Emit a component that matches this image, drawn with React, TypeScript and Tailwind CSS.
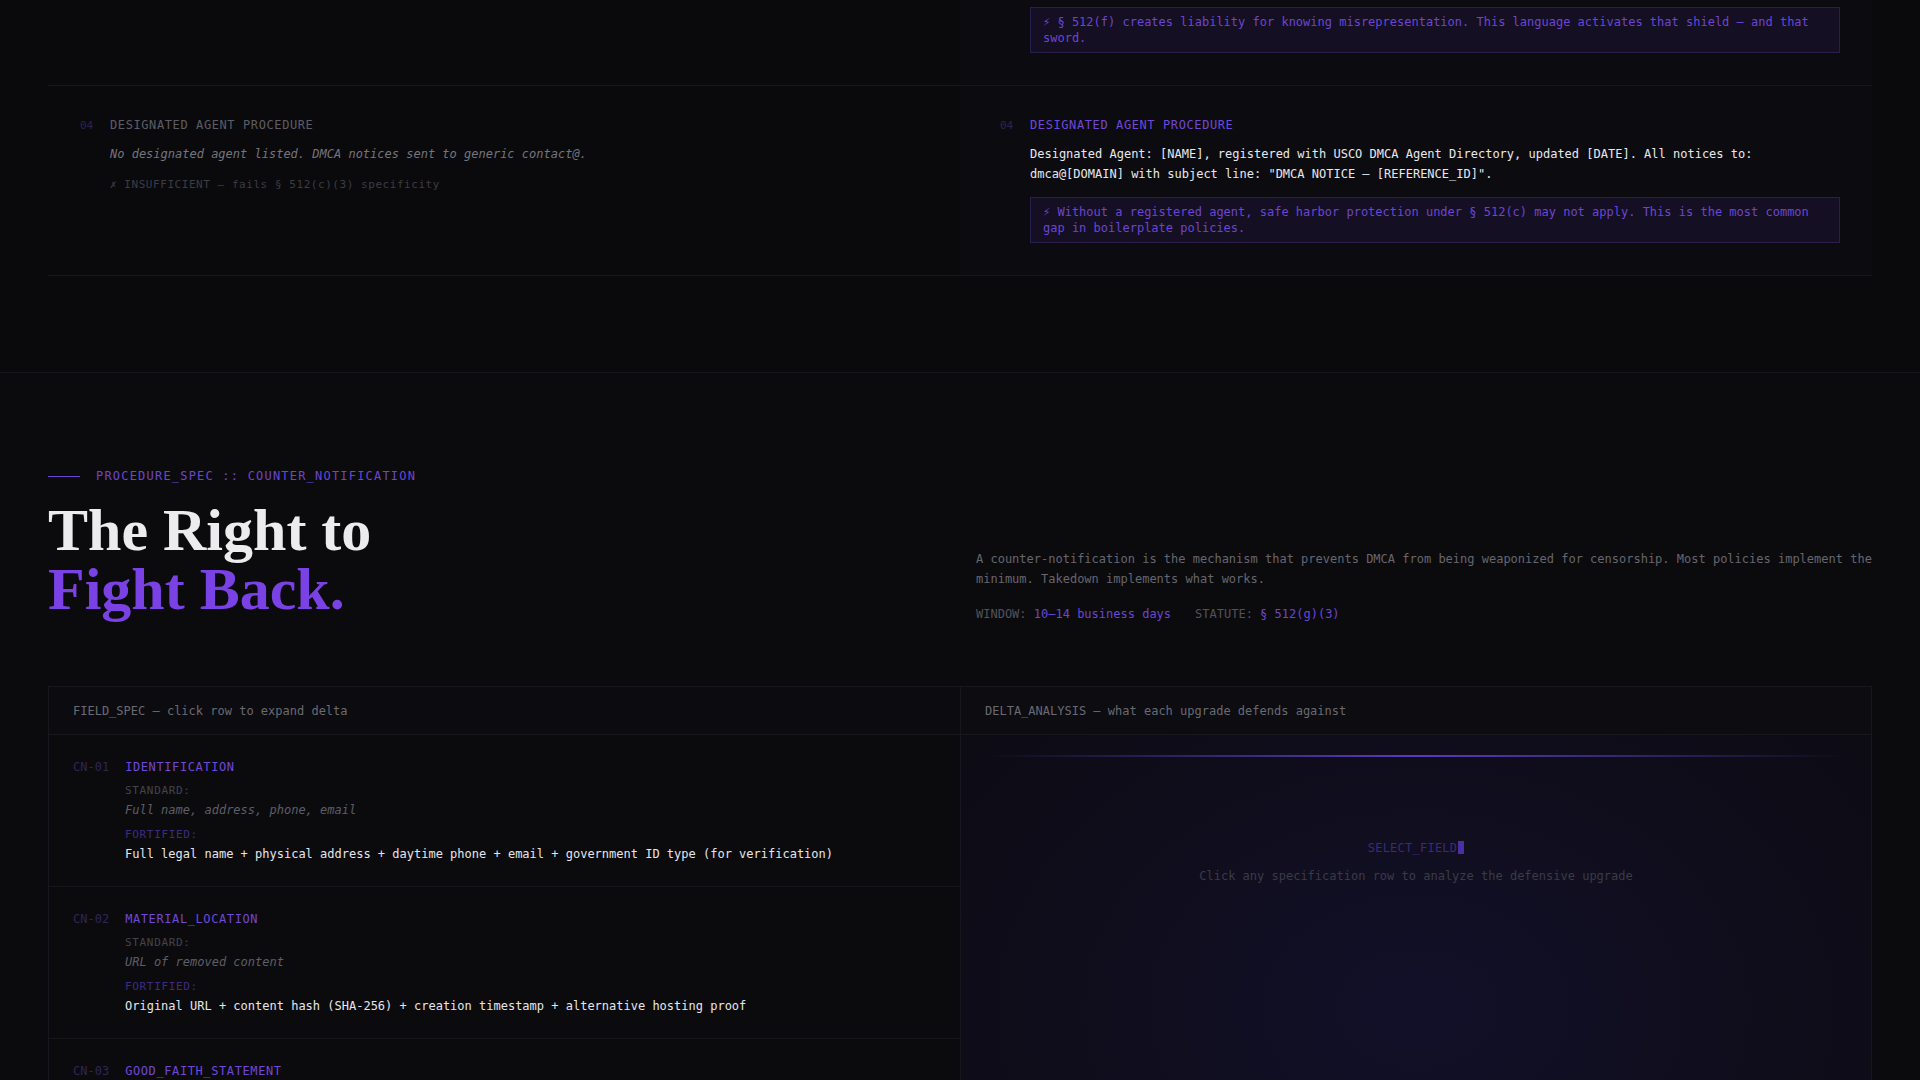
import React from "react";

const mono = "font-['DejaVu_Sans_Mono','Liberation_Mono',monospace]";

const clauses = [
  {
    n: "03",
    title: "BAD FAITH NOTICE PENALTY",
    weak: "Notices must be accurate. Abuse of the process is prohibited.",
    verdict: "✗ INSUFFICIENT — fails § 512(f) deterrence, no consequence",
    strong:
      "Any notice found to contain knowing material misrepresentation will be logged, published to the Lumen database, and referred for action under 17 U.S.C. § 512(f), including recovery of costs and fees.",
    note: "⚡ § 512(f) creates liability for knowing misrepresentation. This language activates that shield — and that sword.",
  },
  {
    n: "04",
    title: "DESIGNATED AGENT PROCEDURE",
    weak: "No designated agent listed. DMCA notices sent to generic contact@.",
    verdict: "✗ INSUFFICIENT — fails § 512(c)(3) specificity",
    strong:
      'Designated Agent: [NAME], registered with USCO DMCA Agent Directory, updated [DATE]. All notices to: dmca@[DOMAIN] with subject line: "DMCA NOTICE — [REFERENCE_ID]".',
    note: "⚡ Without a registered agent, safe harbor protection under § 512(c) may not apply. This is the most common gap in boilerplate policies.",
  },
];

const fields = [
  {
    id: "CN-01",
    name: "IDENTIFICATION",
    standard: "Full name, address, phone, email",
    fortified: "Full legal name + physical address + daytime phone + email + government ID type (for verification)",
  },
  {
    id: "CN-02",
    name: "MATERIAL_LOCATION",
    standard: "URL of removed content",
    fortified: "Original URL + content hash (SHA-256) + creation timestamp + alternative hosting proof",
  },
  {
    id: "CN-03",
    name: "GOOD_FAITH_STATEMENT",
    standard: "Statement under penalty of perjury",
    fortified: "Sworn statement + specific reason the removal was a mistake or misidentification + supporting evidence",
  },
  {
    id: "CN-04",
    name: "JURISDICTION_CONSENT",
    standard: "Consent to federal district court",
    fortified: "Consent to jurisdiction + named venue + agreement to accept service of process from the claimant",
  },
];

function ClauseRow({ c }: { c: (typeof clauses)[number] }) {
  return (
    <div className="grid grid-cols-2 border-b border-[#17171d]">
      <div className="flex items-start gap-4 px-8 pt-[30px] pb-8">
        <span className="w-[14px] pt-px text-[11px] leading-[18px] text-[#2c2450]">{c.n}</span>
        <div className="flex-1">
          <div className="text-[12px] leading-[18px] tracking-wider text-[#5d5d65]">{c.title}</div>
          <p className="mt-[10px] text-[12px] leading-[20px] italic text-[#75757d]">{c.weak}</p>
          <div className="mt-3 text-[11px] leading-[18px] tracking-wider text-[#3c3c44]">{c.verdict}</div>
        </div>
      </div>
      <div className="flex items-start gap-4 bg-[#0c0c10] pl-10 pr-8 pt-[30px] pb-8">
        <span className="w-[14px] pt-px text-[11px] leading-[18px] text-[#2c2450]">{c.n}</span>
        <div className="flex-1">
          <div className="text-[12px] leading-[18px] tracking-wider text-[#7048d8]">{c.title}</div>
          <p className="mt-[10px] text-[12px] leading-[20px] text-[#e8e8ec]">{c.strong}</p>
          <div className="mt-[13px] border border-[#2a1f4c] bg-[#140f22] px-3 py-[6px] text-[12px] leading-[16px] text-[#6d45d4]">
            {c.note}
          </div>
        </div>
      </div>
    </div>
  );
}

function FieldRow({ f }: { f: (typeof fields)[number] }) {
  return (
    <div className="border-b border-[#15151c] px-6 pt-[23px] pb-[22px]">
      <div className="flex gap-4 text-[12px] leading-[18px]">
        <span className="text-[#2f2657]">{f.id}</span>
        <span className="tracking-wider text-[#7048d8]">{f.name}</span>
      </div>
      <div className="pl-[52px]">
        <div className="mt-[6px] text-[11px] leading-[18px] tracking-[0.06em] text-[#43434b]">STANDARD:</div>
        <div className="text-[12px] leading-[20px] italic text-[#5e5e66]">{f.standard}</div>
        <div className="mt-[6px] text-[11px] leading-[18px] tracking-[0.06em] text-[#3e2c80]">FORTIFIED:</div>
        <div className="text-[12px] leading-[20px] text-[#e6e6ea]">{f.fortified}</div>
      </div>
    </div>
  );
}

export default function App() {
  return (
    <div className={`min-h-screen overflow-hidden bg-[#0a0a0d] ${mono}`}>
      <div className="-mt-[104px]">
        <section className="px-12 pb-24">
          {clauses.map((c) => (
            <ClauseRow key={c.n} c={c} />
          ))}
        </section>

        <section className="border-t border-[#16151d] bg-[#0b0b0e] px-12 pt-24">
          <div className="grid grid-cols-2 items-end gap-8">
            <div>
              <div className="flex items-center gap-4">
                <span className="h-px w-8 bg-[#6d45d4]" />
                <span className="text-[12px] leading-[14px] tracking-[0.1em] text-[#6d45d4]">
                  PROCEDURE_SPEC :: COUNTER_NOTIFICATION
                </span>
              </div>
              <h2 className="mt-[18px] pb-1 font-['Liberation_Serif',serif] text-[60px] leading-[59px] font-bold text-[#ececef]">
                The Right to
                <br />
                <span className="text-[#7a42e4]">Fight Back.</span>
              </h2>
            </div>
            <div>
              <p className="text-[12px] leading-[20px] text-[#66666f]">
                A counter-notification is the mechanism that prevents DMCA from being weaponized for censorship. Most
                policies implement the minimum. Takedown implements what works.
              </p>
              <div className="mt-4 flex gap-6 text-[12px] leading-[18px]">
                <span className="text-[#52525b]">
                  WINDOW: <span className="text-[#6d45d4]">10–14 business days</span>
                </span>
                <span className="text-[#52525b]">
                  STATUTE: <span className="text-[#6d45d4]">§ 512(g)(3)</span>
                </span>
              </div>
            </div>
          </div>

          <div className="mt-[63px] grid grid-cols-2 border border-[#17171f]">
            <div>
              <div className="flex h-[48px] items-center border-b border-[#17171f] bg-[#0c0c10] px-6 text-[12px] text-[#6a6a72]">
                FIELD_SPEC — click row to expand delta
              </div>
              {fields.map((f) => (
                <FieldRow key={f.id} f={f} />
              ))}
            </div>
            <div className="flex flex-col border-l border-[#17171f]">
              <div className="flex h-[48px] items-center border-b border-[#17171f] bg-[#0c0c11] px-6 text-[12px] text-[#6a6a72]">
                DELTA_ANALYSIS — what each upgrade defends against
              </div>
              <div className="flex-1 bg-[radial-gradient(ellipse_at_50%_45%,#121029_0%,#0f0d1b_55%,#0c0b12_100%)] px-6 pt-5">
                <div className="h-[2px] bg-linear-to-r from-transparent via-[#5a3bc0] to-transparent" />
                <div className="mt-[82px] text-center">
                  <div className="text-[12px] leading-[18px] tracking-[0.02em] text-[#3a2b78]">
                    SELECT_FIELD<span className="ml-px inline-block h-[13px] w-[6px] translate-y-[2px] bg-[#4a2fa0]" />
                  </div>
                  <div className="mt-[10px] text-[12px] leading-[18px] text-[#3b3b46]">
                    Click any specification row to analyze the defensive upgrade
                  </div>
                </div>
              </div>
            </div>
          </div>
        </section>
      </div>
    </div>
  );
}
